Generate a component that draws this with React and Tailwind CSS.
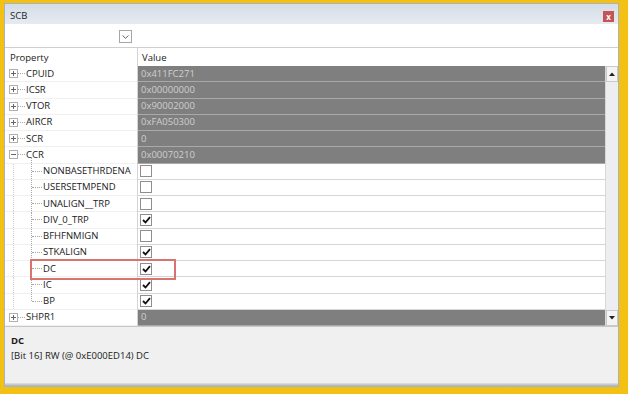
const FONT = { fontFamily: '"Open Sans", "Noto Sans", sans-serif' };

const ROWS = [
  { name: "CPUID", value: "0x411FC271", kind: "reg", open: false },
  { name: "ICSR", value: "0x00000000", kind: "reg", open: false },
  { name: "VTOR", value: "0x90002000", kind: "reg", open: false },
  { name: "AIRCR", value: "0xFA050300", kind: "reg", open: false },
  { name: "SCR", value: "0", kind: "reg", open: false },
  { name: "CCR", value: "0x00070210", kind: "reg", open: true },
  { name: "NONBASETHRDENA", checked: false, kind: "bit" },
  { name: "USERSETMPEND", checked: false, kind: "bit" },
  { name: "UNALIGN__TRP", checked: false, kind: "bit" },
  { name: "DIV_0_TRP", checked: true, kind: "bit" },
  { name: "BFHFNMIGN", checked: false, kind: "bit" },
  { name: "STKALIGN", checked: true, kind: "bit" },
  { name: "DC", checked: true, kind: "bit" },
  { name: "IC", checked: true, kind: "bit" },
  { name: "BP", checked: true, kind: "bit", last: true },
  { name: "SHPR1", value: "0", kind: "reg", open: false },
];

function Expander({ open }) {
  return (
    <div className="w-[9px] h-[9px] border border-[#b0b0b0] bg-white flex items-center justify-center relative">
      <div className="absolute w-[5px] h-px bg-[#666]" />
      {!open && <div className="absolute w-px h-[5px] bg-[#666]" />}
    </div>
  );
}

function Checkbox({ checked }) {
  return (
    <div className="w-[12px] h-[12px] border border-[#8e8e8e] bg-white flex items-center justify-center">
      {checked && (
        <svg width="9" height="8" viewBox="0 0 9 8">
          <path d="M1 4 L3.5 6.5 L8 1.2" stroke="#111" strokeWidth="1.8" fill="none" />
        </svg>
      )}
    </div>
  );
}

function Row({ row, index }) {
  const isReg = row.kind === "reg";
  return (
    <div className="flex h-[16.25px]">
      <div className="relative w-[132px] flex items-center border-b border-[#f0f0f0] bg-white">
        {index > 5 && index < 15 && (
          <div className="absolute left-[8px] top-0 bottom-0 border-l border-dotted border-[#d0d0d0]" />
        )}
        {isReg ? (
          <>
            <div className="ml-[4px]">
              <Expander open={row.open} />
            </div>
            <div className="w-[7px] border-t border-dotted border-[#a8a8a8]" />
            <span className="ml-[1px] text-[9.5px] text-[#1a1a1a]">{row.name}</span>
          </>
        ) : (
          <>
            <div
              className={`absolute left-[26px] top-0 border-l border-dotted border-[#a8a8a8] ${row.last ? "h-1/2" : "bottom-0"}`}
            />
            <div className="ml-[27px] w-[10px] border-t border-dotted border-[#a8a8a8]" />
            <span className="ml-[1px] text-[9.5px] text-[#1a1a1a]">{row.name}</span>
          </>
        )}
        {index === 5 && (
          <div className="absolute left-[26px] top-[11px] bottom-0 border-l border-dotted border-[#a8a8a8]" />
        )}
      </div>
      <div className="w-px bg-[#d4d4d4]" />
      {isReg ? (
        <div className="flex-1 bg-[#7f7f7f] border-b border-[#a9a9a9] flex items-center pl-[3px]">
          <span className="text-[9.5px] text-[#cfcfcf]">{row.value}</span>
        </div>
      ) : (
        <div className="flex-1 bg-white border-b border-[#d6d6d6] flex items-center pl-[2px]">
          <Checkbox checked={row.checked} />
        </div>
      )}
    </div>
  );
}

function ScrollArrow({ up }) {
  return (
    <div className="h-[16px] bg-[#f4f4f4] border border-[#c9c9c9] flex items-center justify-center">
      <svg width="6" height="4" viewBox="0 0 6 4">
        <path d={up ? "M0 4 L3 0.5 L6 4 Z" : "M0 0 L3 3.5 L6 0 Z"} fill="#222" />
      </svg>
    </div>
  );
}

export default function App() {
  return (
    <div className="w-[628px] h-[394px] bg-[#f3c113] pt-[3px] pl-[4px] pr-[9px] pb-[7px]" style={FONT}>
      <div className="relative h-full flex flex-col border border-[#aab3bd] bg-white">
        <div className="h-[20px] flex items-center justify-between pl-[5px] pr-[4px] bg-gradient-to-b from-[#d5dde8] to-[#e6ebf1]">
          <span className="text-[9.5px] text-[#1e1e1e] mt-[5px]">SCB</span>
          <div className="w-[11px] h-[11px] bg-[#c55454] flex items-center justify-center mt-[5px]">
            <span className="text-[8px] leading-none text-white font-bold">x</span>
          </div>
        </div>
        <div className="h-[24px] flex items-center border-b border-[#cfcfcf] bg-white">
          <div className="ml-[114px] mt-[2px] w-[13px] h-[13px] border border-[#a6a6a6] bg-white flex items-center justify-center">
            <svg width="7" height="4" viewBox="0 0 7 4">
              <path d="M0.5 0.5 L3.5 3.3 L6.5 0.5" stroke="#666" strokeWidth="1" fill="none" />
            </svg>
          </div>
        </div>
        <div className="h-[18px] flex items-center bg-white">
          <div className="w-[132px] pl-[5px] pt-[3px] text-[9.5px] text-[#1a1a1a]">Property</div>
          <div className="w-px h-full bg-[#d4d4d4]" />
          <div className="pl-[4px] pt-[3px] text-[9.5px] text-[#1a1a1a]">Value</div>
        </div>
        <div className="h-[260px] flex">
          <div className="flex-1 flex flex-col">
            {ROWS.map((row, i) => (
              <Row key={row.name} row={row} index={i} />
            ))}
          </div>
          <div className="w-[13px] flex flex-col bg-[#eceef2] border-l border-[#d8d8d8]">
            <ScrollArrow up />
            <div className="flex-1" />
            <ScrollArrow />
          </div>
        </div>
        <div className="h-[57px] bg-[#f0f0f0] border-t border-[#c8c8c8] px-[6px] pt-[6px] flex flex-col">
          <span className="text-[9.5px] font-bold text-[#1a1a1a] leading-[15px]">DC</span>
          <span className="text-[9.5px] text-[#1a1a1a] leading-[15px]">[Bit 16] RW (@ 0xE000ED14) DC</span>
        </div>
        <div className="flex-1 bg-gradient-to-b from-[#dfe3ea] to-[#aab3bd]" />
        <div className="absolute left-[25px] top-[255px] w-[146px] h-[21px] border-2 border-[#d8736f]" />
      </div>
    </div>
  );
}
